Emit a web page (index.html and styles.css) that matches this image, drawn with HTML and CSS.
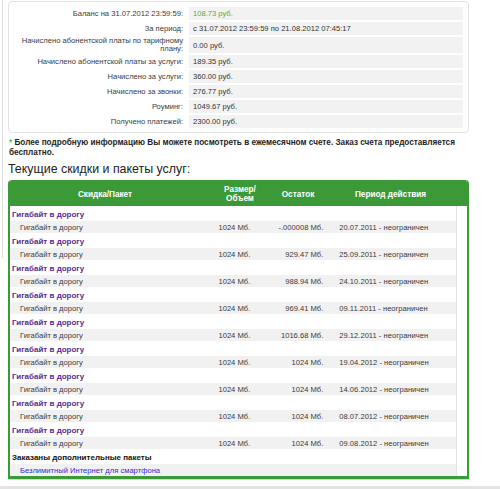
FILE: index.html
```html
<!DOCTYPE html>
<html lang="ru">
<head>
<meta charset="utf-8">
<title>Баланс</title>
<link rel="stylesheet" href="styles.css">
</head>
<body>
<div class="layout">
  <div class="sidebar"></div>
  <div class="content">
    <div class="balance">
      <table class="balance-table">
        <tr><td class="lbl">Баланс на 31.07.2012 23:59:59:</td><td class="val val-green">108.73 руб.</td></tr>
        <tr><td class="lbl">За период:</td><td class="val">с 31.07.2012 23:59:59 по 21.08.2012 07:45:17</td></tr>
        <tr class="tall"><td class="lbl">Начислено абонентской платы по тарифному плану:</td><td class="val">0.00 руб.</td></tr>
        <tr><td class="lbl">Начислено абонентской платы за услуги:</td><td class="val">189.35 руб.</td></tr>
        <tr><td class="lbl">Начислено за услуги:</td><td class="val">360.00 руб.</td></tr>
        <tr><td class="lbl">Начислено за звонки:</td><td class="val">276.77 руб.</td></tr>
        <tr><td class="lbl">Роуминг:</td><td class="val">1049.67 руб.</td></tr>
        <tr><td class="lbl">Получено платежей:</td><td class="val">2300.00 руб.</td></tr>
      </table>
    </div>

    <p class="note">Более подробную информацию Вы можете посмотреть в ежемесячном счете. Заказ счета предоставляется бесплатно.</p>

    <h2 class="title">Текущие скидки и пакеты услуг:</h2>

    <div class="packages">
      <table class="pk-head">
        <colgroup><col class="c-name"><col class="c-size"><col class="c-rest"><col class="c-period-h"></colgroup>
        <tr>
          <th>Скидка/Пакет</th>
          <th class="h-size">Размер/<br>Объем</th>
          <th>Остаток</th>
          <th class="h-period">Период действия</th>
        </tr>
      </table>
      <div class="pk-body">
        <table class="pk-table">
          <colgroup><col class="c-name"><col class="c-size"><col class="c-rest"><col class="c-period"></colgroup>
          <tr class="grp"><td colspan="4">Гигабайт в дорогу</td></tr>
          <tr class="item"><td class="name">Гигабайт в дорогу</td><td class="size">1024 Мб.</td><td class="rest">-.000008 Мб.</td><td class="period">20.07.2011 - неограничен</td></tr>
          <tr class="grp"><td colspan="4">Гигабайт в дорогу</td></tr>
          <tr class="item"><td class="name">Гигабайт в дорогу</td><td class="size">1024 Мб.</td><td class="rest">929.47 Мб.</td><td class="period">25.09.2011 - неограничен</td></tr>
          <tr class="grp"><td colspan="4">Гигабайт в дорогу</td></tr>
          <tr class="item"><td class="name">Гигабайт в дорогу</td><td class="size">1024 Мб.</td><td class="rest">988.94 Мб.</td><td class="period">24.10.2011 - неограничен</td></tr>
          <tr class="grp"><td colspan="4">Гигабайт в дорогу</td></tr>
          <tr class="item"><td class="name">Гигабайт в дорогу</td><td class="size">1024 Мб.</td><td class="rest">969.41 Мб.</td><td class="period">09.11.2011 - неограничен</td></tr>
          <tr class="grp"><td colspan="4">Гигабайт в дорогу</td></tr>
          <tr class="item"><td class="name">Гигабайт в дорогу</td><td class="size">1024 Мб.</td><td class="rest">1016.68 Мб.</td><td class="period">29.12.2011 - неограничен</td></tr>
          <tr class="grp"><td colspan="4">Гигабайт в дорогу</td></tr>
          <tr class="item"><td class="name">Гигабайт в дорогу</td><td class="size">1024 Мб.</td><td class="rest">1024 Мб.</td><td class="period">19.04.2012 - неограничен</td></tr>
          <tr class="grp"><td colspan="4">Гигабайт в дорогу</td></tr>
          <tr class="item"><td class="name">Гигабайт в дорогу</td><td class="size">1024 Мб.</td><td class="rest">1024 Мб.</td><td class="period">14.06.2012 - неограничен</td></tr>
          <tr class="grp"><td colspan="4">Гигабайт в дорогу</td></tr>
          <tr class="item"><td class="name">Гигабайт в дорогу</td><td class="size">1024 Мб.</td><td class="rest">1024 Мб.</td><td class="period">08.07.2012 - неограничен</td></tr>
          <tr class="grp"><td colspan="4">Гигабайт в дорогу</td></tr>
          <tr class="item"><td class="name">Гигабайт в дорогу</td><td class="size">1024 Мб.</td><td class="rest">1024 Мб.</td><td class="period">09.08.2012 - неограничен</td></tr>
          <tr class="grp grp-extra"><td colspan="4">Заказаны дополнительные пакеты</td></tr>
          <tr class="item"><td class="name link" colspan="4">Безлимитный Интернет для смартфона</td></tr>
        </table>
      </div>
    </div>
  </div>
</div>
<div class="footer"></div>
</body>
</html>
```

FILE: styles.css
```css
html, body {
  margin: 0;
  padding: 0;
  background: #fff;
}

body {
  font-family: "Liberation Sans", Tahoma, Arial, sans-serif;
  font-size: 7.6px;
  color: #333;
}

.layout {
  display: flex;
  align-items: flex-start;
}

.sidebar {
  width: 2px;
  height: 258px;
  border-right: 1px solid #dcdcdc;
  flex-shrink: 0;
}

.content {
  width: 461px;
  margin-left: 5px;
  padding-top: 1px;
}

/* balance box */
.balance {
  border: 1px solid #e3e3e3;
  border-radius: 4px;
  padding: 3px 3px 2px 4px;
}

.balance-table {
  border-collapse: separate;
  border-spacing: 2px;
  width: 452px;
  table-layout: fixed;
}

.balance-table tr {
  height: 13px;
}

.balance-table tr.tall {
  height: 16px;
}

.lbl {
  width: 168px;
  padding: 0 4px 0 0;
  text-align: right;
  color: #3a3a3a;
  line-height: 8px;
  vertical-align: middle;
}

.val {
  background: #f2f2f2;
  padding: 0 4px;
  color: #333;
  line-height: 9px;
  vertical-align: middle;
  white-space: nowrap;
}

.val-green {
  color: #5faa3c;
}

/* note */
.note {
  margin: 5px 0 0;
  padding-left: 1px;
  font-weight: bold;
  color: #1e1e1e;
  line-height: 10px;
  font-size: 8.2px;
}

.note::before {
  content: "* ";
  color: #4cc04c;
}

.title {
  margin: 4px 0 3px;
  font-size: 12.4px;
  font-weight: normal;
  color: #222;
  line-height: 15px;
}

/* packages */
.packages {
  border-left: 2px solid #3b9a37;
  border-right: 2px solid #3b9a37;
  border-bottom: 3px solid #3b9a37;
  border-radius: 4px 4px 0 0;
  overflow: hidden;
  box-shadow: 0 1px 1px rgba(0, 0, 0, 0.18);
}

.pk-head {
  width: 457px;
  table-layout: fixed;
  border-collapse: collapse;
  background: #3b9a37;
}

.pk-head th {
  height: 23px;
  padding: 3px 0 0;
  color: #fff;
  font-weight: bold;
  text-align: center;
  vertical-align: middle;
  line-height: 9px;
  font-size: 8.2px;
}

.pk-head th.h-size {
  padding-left: 18px;
  padding-top: 1px;
}

.pk-head th.h-period {
  padding-right: 20px;
}

.c-name { width: 190px; }
.c-size { width: 62px; }
.c-rest { width: 72px; }
.c-period { width: 122px; }
.c-period-h { width: 133px; }

.pk-body {
  padding-right: 10px;
}

.pk-table {
  width: 447px;
  table-layout: fixed;
  border-collapse: collapse;
  border-right: 1px solid #e4e4e4;
}

.pk-table td {
  padding: 0;
  vertical-align: middle;
  white-space: nowrap;
}

.grp {
  height: 15px;
}

.grp td {
  padding-left: 2px;
  padding-top: 1px;
  font-weight: bold;
  color: #5a2a8e;
  font-size: 8px;
}

.grp-extra td {
  color: #111;
}

.item {
  height: 12px;
  background: #f1f1f1;
  color: #3a3a3a;
}

.item .name {
  padding-left: 10px;
}

.item .size {
  text-align: right;
  padding-right: 12px;
}

.item .rest {
  text-align: right;
  padding-right: 11px;
}

.item .period {
  padding-left: 5px;
}

.item .link {
  color: #2f2fd0;
}

.footer {
  margin-top: 7px;
  height: 20px;
  background: #e3e3e3;
}
```
